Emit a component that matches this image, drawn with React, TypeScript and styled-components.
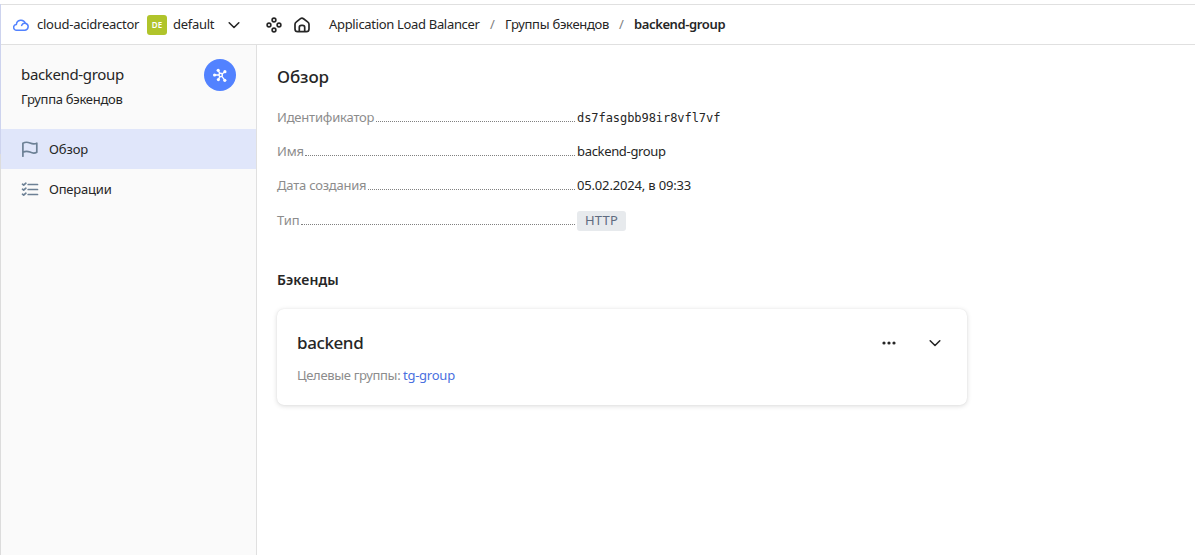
import React from 'react';
import styled, { createGlobalStyle } from 'styled-components';

const Global = createGlobalStyle`
  * { box-sizing: border-box; }
  body {
    margin: 0;
    background: #fff;
    color: #262626;
    font: 400 13px/18px "Noto Sans", "Open Sans", sans-serif;
    overflow: hidden;
  }
`;

const Page = styled.div`
  height: 555px;
  padding-top: 4px;
  display: flex;
`;

const Edge = styled.div`
  width: 1px;
  flex: none;
  background: linear-gradient(#cdd3ee 0 150px, #dcdcdc 150px);
`;

const Shell = styled.div`
  flex: 1;
  display: flex;
  flex-direction: column;
  border-top: 1px solid #e0e0e0;
`;

const Header = styled.header`
  height: 40px;
  flex: none;
  display: flex;
  align-items: center;
  padding-left: 12px;
  border-bottom: 1px solid #e0e0e0;
`;

const Text = styled.span<{ $ls?: number }>`
  white-space: nowrap;
  letter-spacing: ${(p) => p.$ls ?? 0}px;
`;

const Cloud = styled(Text)`
  width: 118px;
  padding: 0 0 2px 8px;
  flex: none;
`;

const FolderBadge = styled.span`
  width: 20px;
  height: 20px;
  flex: none;
  margin-right: 6px;
  border-radius: 3px;
  background: #b0c42b;
  color: #fff;
  font-size: 8px;
  font-weight: 600;
  line-height: 20px;
  text-align: center;
`;

const Folder = styled(Text)`
  width: 53px;
  padding-bottom: 2px;
  flex: none;
`;

const HeaderIcons = styled.div`
  display: flex;
  gap: 12px;
  width: 87px;
  flex: none;
  padding-left: 24px;
`;

const Crumbs = styled.nav`
  display: flex;
  align-items: center;
  padding-bottom: 2px;
`;

const Crumb = styled(Text)<{ $w: number; $current?: boolean }>`
  width: ${(p) => p.$w}px;
  flex: none;
  font-weight: ${(p) => (p.$current ? 600 : 400)};
`;

const Slash = styled.span`
  width: 25px;
  flex: none;
  text-align: center;
  color: #808080;
`;

const Body = styled.div`
  flex: 1;
  display: flex;
`;

const Sidebar = styled.aside`
  width: 256px;
  flex: none;
  background: #fafafa;
  border-right: 1px solid #e0e0e0;
`;

const Resource = styled.div`
  height: 84px;
  padding: 14px 20px 0;
  display: flex;
  justify-content: space-between;
`;

const ResourceName = styled(Text)`
  display: block;
  margin-top: 5px;
  font-size: 15px;
  line-height: 20px;
`;

const ResourceType = styled(Text)`
  display: block;
  margin-top: 6px;
`;

const ResourceIcon = styled.div`
  width: 32px;
  height: 32px;
  border-radius: 50%;
  background: #5282ff;
  display: flex;
  align-items: center;
  justify-content: center;
`;

const NavItem = styled.a<{ $active?: boolean }>`
  height: 40px;
  padding-left: 20px;
  display: flex;
  align-items: center;
  gap: 10px;
  background: ${(p) => (p.$active ? '#e0e6fa' : 'transparent')};
`;

const Main = styled.main`
  flex: 1;
  padding: 20px 20px 0;
`;

const Title = styled.h1`
  margin: 0 0 19px;
  font-size: 17px;
  font-weight: 500;
  line-height: 24px;
  letter-spacing: -0.1px;
`;

const Row = styled.div<{ $h?: number }>`
  height: ${(p) => p.$h ?? 34}px;
  width: 690px;
  display: flex;
  align-items: flex-start;
`;

const Label = styled.div`
  width: 300px;
  flex: none;
  height: 14px;
  display: flex;
  align-items: flex-end;
  color: #8c8c8c;
`;

const LabelText = styled(Text)<{ $w: number }>`
  width: ${(p) => p.$w}px;
  flex: none;
  margin-bottom: -4px;
`;

const Leader = styled.span`
  flex: 1;
  margin-right: 2px;
  border-bottom: 1px dotted #808080;
`;

const Mono = styled(Text)`
  padding-top: 1px;
  font: 12px/18px "DejaVu Sans Mono", monospace;
`;

const Tag = styled.span`
  height: 20px;
  width: 49px;
  border-radius: 3px;
  background: #e7eaed;
  color: #5f6b80;
  line-height: 18px;
  text-align: center;
  letter-spacing: 0.2px;
`;

const Subtitle = styled.h2`
  margin: 25px 0 19px;
  font-size: 14px;
  font-weight: 600;
  line-height: 20px;
  letter-spacing: 0.1px;
`;

const Card = styled.section`
  width: 690px;
  height: 96px;
  padding: 22px 20px 0;
  border-radius: 7px;
  box-shadow: 0 0 1px rgba(0, 0, 0, 0.1), 0 1px 5px rgba(0, 0, 0, 0.15);
`;

const CardHead = styled.div`
  height: 24px;
  display: flex;
  align-items: center;
`;

const CardName = styled.h3`
  margin: 0;
  flex: 1;
  font-size: 17px;
  font-weight: 500;
  line-height: 24px;
  letter-spacing: -0.4px;
`;

const CardActions = styled.div`
  display: flex;
  gap: 30px;
  padding-right: 4px;
`;

const Targets = styled.div`
  margin-top: 11px;
  display: flex;
  color: #8c8c8c;
`;

const TargetsLabel = styled(Text)`
  width: 106px;
`;

const Link = styled(Text)`
  color: #4a70e0;
`;

const Chevron = () => (
  <svg width="16" height="16" viewBox="0 0 16 16" fill="none" stroke="#262626" strokeWidth="1.6" strokeLinecap="round" strokeLinejoin="round">
    <path d="M3.2 5.8 8 10.5l4.8-4.7" />
  </svg>
);

const CloudIcon = () => (
  <svg width="16" height="16" viewBox="0 0 16 16" fill="none" stroke="#5282ff" strokeWidth="1.5" strokeLinecap="round" strokeLinejoin="round">
    <path d="M3.6 13.2a2.850 2.850 0 0 1-.2-5.700 4.600 4.600 0 0 1 8.900-1.300 3.550 3.550 0 0 1-.2 7Z" />
    <path d="M8.600 8.400a3.200 3.200 0 0 1 3.700-2.100" />
  </svg>
);

const ServicesIcon = () => (
  <svg width="16" height="16" viewBox="0 0 16 16" fill="none" stroke="#262626" strokeWidth="1.6">
    <circle cx="8" cy="3" r="1.9" />
    <circle cx="3" cy="8" r="1.9" />
    <circle cx="13" cy="8" r="1.9" />
    <circle cx="8" cy="13" r="1.9" />
  </svg>
);

const HomeIcon = () => (
  <svg width="16" height="16" viewBox="0 0 16 16" fill="none" stroke="#262626" strokeWidth="1.700" strokeLinejoin="round">
    <path d="M1 7.300c0-.9.4-1.700 1.100-2.200L6.500 1.700a2.500 2.500 0 0 1 3 0L13.900 5.100c.7.500 1.100 1.300 1.100 2.200V12a2.700 2.700 0 0 1-2.700 2.700H3.700A2.700 2.700 0 0 1 1 12Z" />
    <path d="M5.300 14.700V10.400a2 2 0 0 1 2-2h1.400a2 2 0 0 1 2 2v4.300" />
  </svg>
);

const NodesIcon = () => (
  <svg width="16" height="16" viewBox="0 0 16 16" fill="none" stroke="#fff" strokeWidth="1.3">
    <circle cx="8.700" cy="8" r="1.700" strokeWidth="1.500" />
    <path d="M2.500 8H7M7.700 6.400 6.300 3.500M10.100 6.900l3-2.300M7.800 9.500l-1.300 2.900M9.900 9.300l3 4" />
    <g fill="#fff" stroke="none">
      <circle cx="2.600" cy="8" r="1.600" />
      <circle cx="6.200" cy="3.300" r="1.600" />
      <circle cx="12.900" cy="4.700" r="1.600" />
      <circle cx="6.400" cy="12.600" r="1.600" />
      <circle cx="12.800" cy="13.300" r="1.600" />
    </g>
  </svg>
);

const FlagIcon = () => (
  <svg width="18" height="18" viewBox="0 0 18 18" fill="none" stroke="#6c8095" strokeWidth="1.700" strokeLinecap="round" strokeLinejoin="round">
    <path d="M1.900 16.200V3.300C4.200 1.900 6.800 2.100 9 3s4.800 1.100 6.800.2v9C13.800 13.400 11.200 13.100 9 12.100s-4.800-1.100-7.100.2" />
  </svg>
);

const ListIcon = () => (
  <svg width="18" height="18" viewBox="0 0 18 18" fill="none" stroke="#6c8095" strokeWidth="1.700" strokeLinecap="round" strokeLinejoin="round">
    <path d="M7.200 4.500H16.500M7.200 9.500H16.500M7.200 14.500H16.500" />
    <path d="M1.500 4.200 2.700 5.200 4.900 3.200M1.500 9.200 2.700 10.200 4.900 8.200M1.500 14.200 2.700 15.200 4.900 13.200" />
  </svg>
);

const DotsIcon = () => (
  <svg width="16" height="16" viewBox="0 0 16 16" fill="#262626">
    <circle cx="3" cy="8" r="1.600" />
    <circle cx="8" cy="8" r="1.600" />
    <circle cx="13" cy="8" r="1.600" />
  </svg>
);

export default function App() {
  return (
    <>
      <Global />
      <Page>
        <Edge />
        <Shell>
          <Header>
            <CloudIcon />
            <Cloud $ls={-0.25}>cloud-acidreactor</Cloud>
            <FolderBadge>DE</FolderBadge>
            <Folder $ls={-0.27}>default</Folder>
            <Chevron />
            <HeaderIcons>
              <ServicesIcon />
              <HomeIcon />
            </HeaderIcons>
            <Crumbs>
              <Crumb $w={151} $ls={-0.32}>Application Load Balancer</Crumb>
              <Slash>/</Slash>
              <Crumb $w={104} $ls={-0.28}>Группы бэкендов</Crumb>
              <Slash>/</Slash>
              <Crumb $w={92} $ls={-0.38} $current>backend-group</Crumb>
            </Crumbs>
          </Header>
          <Body>
            <Sidebar>
              <Resource>
                <div>
                  <ResourceName $ls={-0.35}>backend-group</ResourceName>
                  <ResourceType $ls={-0.27}>Группа бэкендов</ResourceType>
                </div>
                <ResourceIcon><NodesIcon /></ResourceIcon>
              </Resource>
              <NavItem $active><FlagIcon /><Text $ls={-0.1}>Обзор</Text></NavItem>
              <NavItem><ListIcon /><Text $ls={-0.2}>Операции</Text></NavItem>
            </Sidebar>
            <Main>
              <Title>Обзор</Title>
              <Row><Label><LabelText $w={99} $ls={-0.2}>Идентификатор</LabelText><Leader /></Label><Mono $ls={-0.06}>ds7fasgbb98ir8vfl7vf</Mono></Row>
              <Row><Label><LabelText $w={28} $ls={-0.1}>Имя</LabelText><Leader /></Label><Text $ls={-0.33}>backend-group</Text></Row>
              <Row $h={35}><Label><LabelText $w={91} $ls={-0.22}>Дата создания</LabelText><Leader /></Label><Text $ls={-0.17}>05.02.2024, в 09:33</Text></Row>
              <Row><Label><LabelText $w={24} $ls={-0.1}>Тип</LabelText><Leader /></Label><Tag>HTTP</Tag></Row>
              <Subtitle>Бэкенды</Subtitle>
              <Card>
                <CardHead>
                  <CardName>backend</CardName>
                  <CardActions><DotsIcon /><Chevron /></CardActions>
                </CardHead>
                <Targets><TargetsLabel $ls={-0.33}>Целевые группы:</TargetsLabel><Link $ls={-0.25}>tg-group</Link></Targets>
              </Card>
            </Main>
          </Body>
        </Shell>
      </Page>
    </>
  );
}
